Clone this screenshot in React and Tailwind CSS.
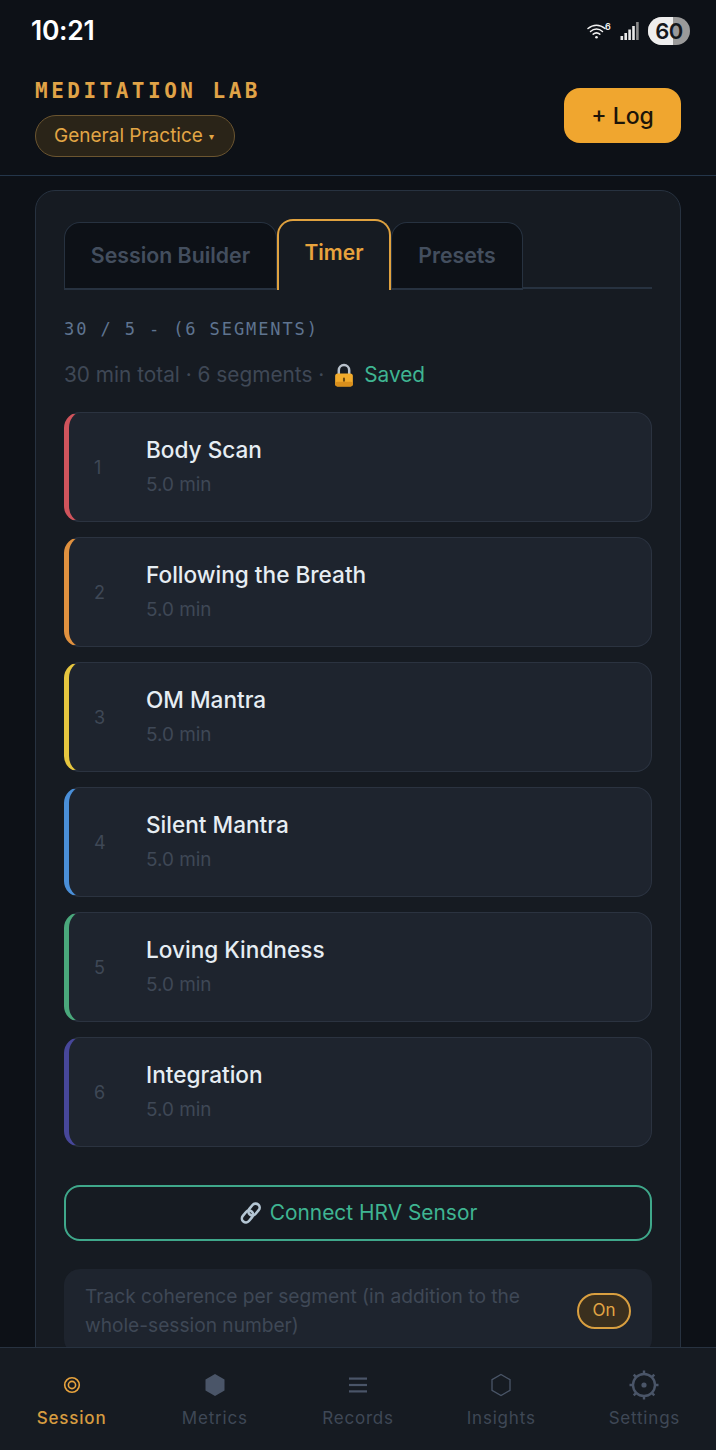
const inter = { fontFamily: 'Inter, "Noto Sans", sans-serif' };

const segments = [
  { n: 1, name: "Body Scan", color: "border-l-[#d0545c]" },
  { n: 2, name: "Following the Breath", color: "border-l-[#e0913f]" },
  { n: 3, name: "OM Mantra", color: "border-l-[#e6c63f]" },
  { n: 4, name: "Silent Mantra", color: "border-l-[#4a8fd8]" },
  { n: 5, name: "Loving Kindness", color: "border-l-[#4aa87c]" },
  { n: 6, name: "Integration", color: "border-l-[#47479a]" },
];

function Wifi() {
  return (
    <svg width="24" height="18" viewBox="0 0 24 18" fill="none" stroke="#f0f0f0" strokeWidth="1.5" strokeLinecap="round">
      <path d="M1 6.5C6 2 13 2 18 6.5" />
      <path d="M3.5 9.5C7 6.3 12 6.3 15.5 9.5" />
      <path d="M6.2 12.2C8.2 10.6 10.8 10.6 12.8 12.2" />
      <circle cx="9.5" cy="15.2" r="1.3" fill="#f0f0f0" stroke="none" />
      <text x="18" y="7.5" fontSize="9" fontWeight="600" fill="#f0f0f0" stroke="none" fontFamily="Inter">6</text>
    </svg>
  );
}

function Signal() {
  return (
    <svg width="20" height="20" viewBox="0 0 20 20" fill="#e8e8e8">
      <rect x="0.5" y="15" width="2.6" height="4" />
      <rect x="4.4" y="12" width="2.6" height="7" />
      <rect x="8.3" y="8.5" width="2.6" height="10.5" />
      <rect x="12.2" y="5" width="2.6" height="14" />
      <rect x="16.1" y="1" width="2.6" height="18" fill="#8a8a8a" />
    </svg>
  );
}

function Lock() {
  return (
    <svg width="22" height="25" viewBox="0 0 20 24" className="shrink-0">
      <path d="M5 11V7a5 5 0 0 1 10 0v4" fill="none" stroke="#b9c2cc" strokeWidth="2.4" />
      <rect x="1.5" y="10" width="17" height="12.5" rx="2.5" fill="#f2ab2c" />
      <rect x="1.5" y="18" width="17" height="4.5" rx="2" fill="#d98f1c" />
      <rect x="9" y="14" width="2" height="4" rx="1" fill="#6d4a10" />
    </svg>
  );
}

function Link() {
  return (
    <svg width="24" height="24" viewBox="0 0 24 24" fill="none" stroke="#b4c6d4" strokeWidth="2.6" strokeLinecap="round" className="shrink-0">
      <rect x="11" y="2" width="8" height="13" rx="4" transform="rotate(40 15 8.5)" />
      <rect x="4.5" y="9" width="8" height="13" rx="4" transform="rotate(40 8.5 15.5)" />
    </svg>
  );
}

function SessionIcon() {
  return (
    <svg width="18" height="18" viewBox="0 0 18 18" fill="none" stroke="#e8a33d">
      <circle cx="9" cy="9" r="7.3" strokeWidth="1.6" />
      <circle cx="9" cy="9" r="3.6" strokeWidth="1.6" />
    </svg>
  );
}

function HexFill() {
  return (
    <svg width="20" height="24" viewBox="0 0 20 24" fill="#4a5568">
      <path d="M10 1l9.5 5.5v11L10 23 .5 17.500v-11z" />
    </svg>
  );
}

function Lines() {
  return (
    <svg width="18" height="16" viewBox="0 0 18 16" fill="#4a5568">
      <rect y="0.5" width="18" height="2.2" />
      <rect y="6.9" width="18" height="2.2" />
      <rect y="13.3" width="18" height="2.2" />
    </svg>
  );
}

function HexOutline() {
  return (
    <svg width="20" height="24" viewBox="0 0 20 24" fill="none" stroke="#4a5568" strokeWidth="1.3">
      <path d="M10 1.500l9 5.200v10.600l-9 5.200-9-5.200V6.700z" />
    </svg>
  );
}

function Gear() {
  return (
    <svg width="32" height="32" viewBox="0 0 32 32" fill="none" stroke="#4a5568">
      <circle cx="16" cy="16" r="11" strokeWidth="2.4" />
      <circle cx="16" cy="16" r="2.6" fill="#4a5568" stroke="none" />
      <path strokeWidth="2.4" d="M16 1.500v3.500M16 27v3.500M1.500 16H5M27 16h3.500M5.700 5.700l2.500 2.500M23.800 23.800l2.500 2.500M5.700 26.300l2.500-2.500M23.800 8.200l2.500-2.500" />
    </svg>
  );
}

const navItems = [
  { label: "Session", icon: <SessionIcon />, active: true },
  { label: "Metrics", icon: <HexFill /> },
  { label: "Records", icon: <Lines /> },
  { label: "Insights", icon: <HexOutline /> },
  { label: "Settings", icon: <Gear /> },
];

export default function App() {
  return (
    <div style={inter} className="w-[716px] h-[1450px] bg-[#0d1117] flex flex-col overflow-hidden">
      <div className="h-[176px] shrink-0 border-b border-[#24364a] flex flex-col">
        <div className="h-[62px] pl-[31px] pr-[26px] flex items-center justify-between">
          <span className="text-[26.500px] font-semibold text-white tracking-[-0.3px]">10:21</span>
          <div className="flex items-center">
            <Wifi />
            <span className="ml-[9px]"><Signal /></span>
            <div className="relative ml-[8px] w-[42px] h-[28px] rounded-full overflow-hidden bg-[#9a9a9a] flex items-center justify-center">
              <div className="absolute inset-y-0 left-0 w-[25px] bg-[#eeeeee]" />
              <span className="relative text-[22px] font-semibold text-[#15181c] tracking-[-0.5px]">60</span>
            </div>
          </div>
        </div>
        <div className="flex justify-between pl-[35px] pr-[35px]">
          <div className="flex flex-col items-start pt-[14px]">
            <div style={{ fontFamily: '"DejaVu Sans Mono", monospace' }} className="h-[31px] leading-[31px] text-[21px] font-bold text-[#e0a347] tracking-[3.500px] whitespace-nowrap">
              MEDITATION LAB
            </div>
            <div className="mt-[8px] h-[42px] w-[200px] rounded-full border border-[#6b5530] bg-[#2a2418] flex items-center pl-[18px] text-[19px] text-[#e3a645] whitespace-nowrap">
              General Practice
              <span className="ml-[6px] text-[10px]">▾</span>
            </div>
          </div>
          <div className="mt-[26px] w-[117px] h-[55px] pt-[1px] rounded-[16px] bg-[#f0a62f] text-[#1c1409] text-[23px] font-medium flex items-center justify-center">
            + Log
          </div>
        </div>
      </div>

      <div className="flex-1 min-h-0 overflow-hidden px-[35px] pt-[14px]">
        <div className="rounded-[20px] border border-[#273240] bg-[#161b22] px-[28px] pt-[28px] pb-[28px]">
          <div className="flex items-end h-[70px] border-b-2 border-[#273240]">
            <div className="w-[213px] h-[68px] -mb-[3px] rounded-t-[16px] border border-b-2 border-[#273240] bg-[#0d1117] text-[#434e5e] text-[21.300px] font-semibold flex items-center justify-center">
              Session Builder
            </div>
            <div className="w-[114px] h-[71px] -mb-[3px] rounded-t-[16px] border-2 border-b-0 border-[#e0a23f] bg-[#161b22] text-[#e8a33d] text-[21px] font-semibold flex items-center justify-center pb-[6px]">
              Timer
            </div>
            <div className="w-[132px] h-[68px] -mb-[3px] rounded-t-[16px] border border-b-2 border-[#273240] bg-[#0d1117] text-[#434e5e] text-[21.300px] font-semibold flex items-center justify-center">
              Presets
            </div>
          </div>

          <div style={{ fontFamily: '"DejaVu Sans Mono", monospace' }} className="mt-[28px] text-[17px] leading-[24px] text-[#5f7490] tracking-[1.900px] whitespace-nowrap">
            30 / 5 - (6 SEGMENTS)
          </div>
          <div className="mt-[19px] h-[30px] flex items-center text-[20.800px] text-[#3f4856] whitespace-nowrap">
            <span>30 min total · 6 segments ·</span>
            <span className="ml-[9px]"><Lock /></span>
            <span className="ml-[9px] text-[#3fb592]">Saved</span>
          </div>

          <div className="mt-[22px] flex flex-col gap-[15px]">
            {segments.map((s) => (
              <div key={s.n} className={`h-[110px] rounded-[16px] border border-[#2b3340] border-l-[5px] ${s.color} bg-[#1e242e] flex items-center`}>
                <span className="w-[77px] shrink-0 pl-[25px] text-[18px] text-[#3f4856]">{s.n}</span>
                <div>
                  <div className="text-[22.600px] leading-[30px] font-[450] text-[#e6edf3] -mt-[2px]">{s.name}</div>
                  <div className="mt-[8px] text-[18.900px] leading-[24px] text-[#3f4856]">5.0 min</div>
                </div>
              </div>
            ))}
          </div>

          <div className="mt-[38px] h-[56px] rounded-[16px] border-2 border-[#3fa88b] text-[#3fb592] text-[20.900px] flex items-center justify-center gap-[7px]">
            <Link />
            Connect HRV Sensor
          </div>

          <div className="mt-[28px] rounded-[16px] bg-[#1e242e] pl-[21px] pr-[21px] pt-[13px] pb-[15px] flex items-center justify-between">
            <div className="w-[470px] text-[19.150px] leading-[29px] text-[#3f4856]">
              Track coherence per segment (in addition to the whole-session number)
            </div>
            <div className="w-[54px] h-[36px] rounded-full border-2 border-[#d99f40] bg-[#3a2f1e] text-[#e3a645] text-[17px] flex items-center justify-center">
              On
            </div>
          </div>
        </div>
      </div>

      <div className="h-[103px] shrink-0 border-t border-[#273240] bg-[#161b22] grid grid-cols-5">
        {navItems.map((item) => (
          <div key={item.label} className="flex flex-col items-center">
            <div className="h-[34px] mt-[20px] flex items-center justify-center">{item.icon}</div>
            <span className={`mt-[4px] text-[17px] leading-[24px] tracking-[0.8px] ${item.active ? "font-medium text-[#d69c40]" : "text-[#3f4856]"}`}>
              {item.label}
            </span>
          </div>
        ))}
      </div>
    </div>
  );
}
